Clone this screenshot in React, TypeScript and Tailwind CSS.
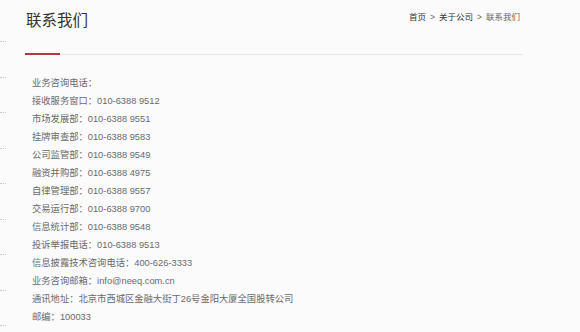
const lines = [
  "业务咨询电话：",
  "接收服务窗口：010-6388 9512",
  "市场发展部：010-6388 9551",
  "挂牌审查部：010-6388 9583",
  "公司监管部：010-6388 9549",
  "融资并购部：010-6388 4975",
  "自律管理部：010-6388 9557",
  "交易运行部：010-6388 9700",
  "信息统计部：010-6388 9548",
  "投诉举报电话：010-6388 9513",
  "信息披露技术咨询电话：400-626-3333",
  "业务咨询邮箱：info@neeq.com.cn",
  "通讯地址：北京市西城区金融大街丁26号金阳大厦全国股转公司",
  "邮编：100033",
]

const App = () => {
  return (
    <div
      className="flex w-full h-[332px] overflow-hidden bg-[#fbfbfc] text-[#666]"
      style={{ fontFamily: '"Liberation Sans", "Noto Sans CJK SC", sans-serif' }}
    >
      <div className="w-[25px] shrink-0 flex flex-col pt-[41px] gap-[34.5px]">
        {Array.from({ length: 9 }).map((_, i) => (
          <div key={i} className="w-[6px] h-0 border-t border-dotted border-[#ccc]" />
        ))}
      </div>
      <div className="w-[498px] shrink-0">
        <div className="flex justify-between items-start h-[53px] pt-[11px]">
          <h1 className="text-[15.5px] leading-[20px] text-[#333] pl-[1px]">联系我们</h1>
          <div className="text-[8.5px] leading-[12px] pr-[3px] flex gap-[4px]">
            <span className="text-[#333]">首页</span>
            <span className="text-[#666]">&gt;</span>
            <span className="text-[#333]">关于公司</span>
            <span className="text-[#666]">&gt;</span>
            <span className="text-[#666]">联系我们</span>
          </div>
        </div>
        <div className="flex items-end h-[2px]">
          <div className="w-[35px] h-[2px] bg-[#b33a3a]" />
          <div className="flex-1 h-[1px] bg-[#e6e6e8]" />
        </div>
        <div className="mt-[19px] pl-[7px] text-[9.3px] leading-[18px] text-[#6a6a6a]">
          {lines.map((l) => (
            <div key={l}>{l}</div>
          ))}
        </div>
      </div>
    </div>
  )
}

export default App
